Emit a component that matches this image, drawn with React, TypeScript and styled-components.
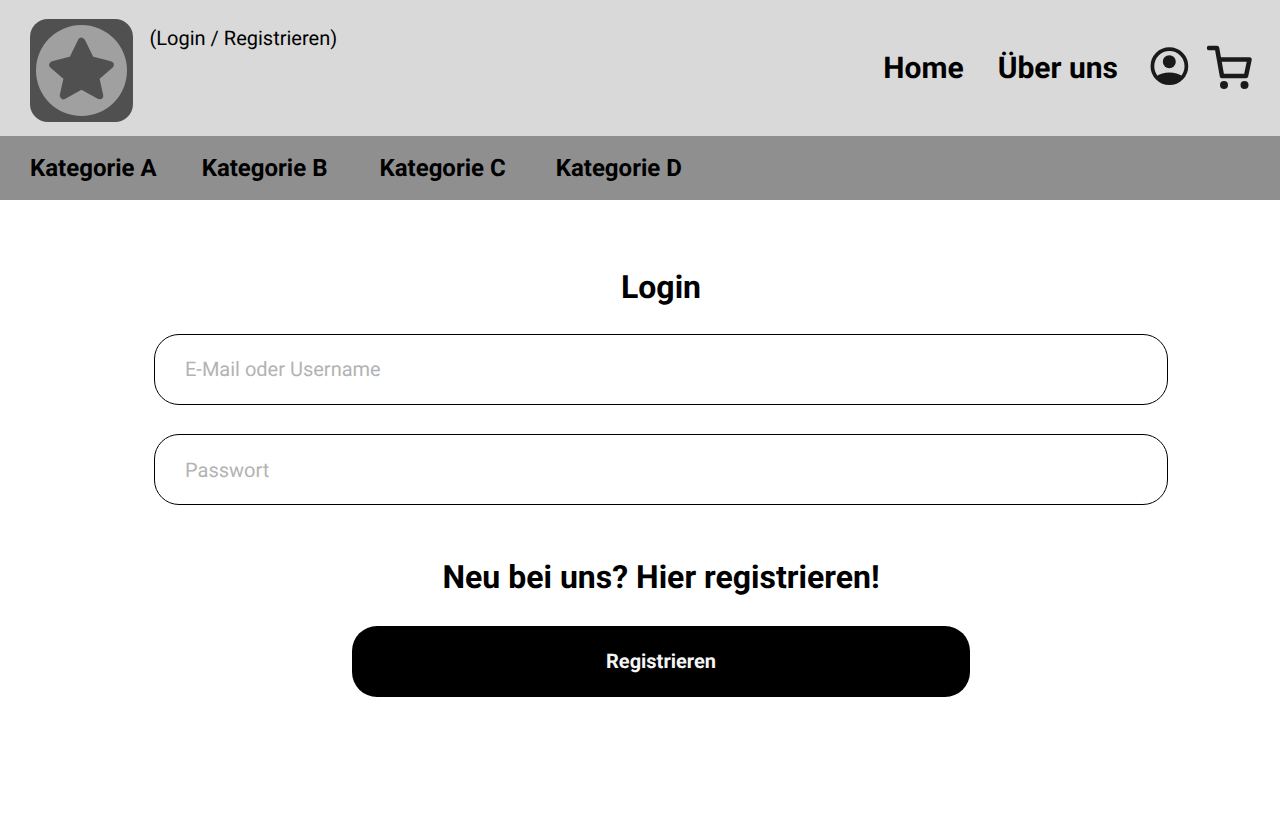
import { createGlobalStyle, styled } from 'styled-components';

const GlobalStyle = createGlobalStyle`
    html, body {
        margin: 0;
        padding: 0;
        background: #fff;
        font-family: Roboto, "Liberation Sans", sans-serif;
        color: #000;
        text-rendering: geometricPrecision;
    }
`;

const Header = styled.header`
    height: 136px;
    box-sizing: border-box;
    background: #d9d9d9;
    display: flex;
    justify-content: space-between;
    padding: 19px 27px 0 30px;
`;

const Brand = styled.div`
    display: flex;
    align-items: flex-start;
    gap: 16.5px;
`;

const Logo = styled.svg`
    display: block;
    width: 103px;
    height: 103px;
`;

const LoginLink = styled.a`
    font-size: 20px;
    line-height: 24px;
    margin-top: 7px;
`;

const HeaderRight = styled.div`
    display: flex;
    align-items: flex-start;
    padding-top: 28px;
`;

const HeaderLink = styled.a<{ $gap: number }>`
    font-size: 30px;
    font-weight: 700;
    line-height: 42px;
    margin-top: 1px;
    margin-right: ${(p) => p.$gap}px;
`;

const IconSvg = styled.svg<{ $gap?: number; $top: number }>`
    display: block;
    margin-right: ${(p) => p.$gap ?? 0}px;
    margin-top: ${(p) => p.$top}px;
`;

const CategoryBar = styled.nav`
    height: 64px;
    background: #8f8f8f;
    display: flex;
    align-items: center;
    padding-left: 30px;
`;

const Category = styled.a<{ $gap: number }>`
    font-size: 24px;
    font-weight: 700;
    line-height: 28px;
    margin-right: ${(p) => p.$gap}px;
`;

const Main = styled.main`
    padding: 68px 112px 0 154px;
    display: flex;
    flex-direction: column;
    align-items: center;
`;

const Title = styled.h2`
    margin: 0;
    font-size: 32px;
    font-weight: 700;
    line-height: 38px;
`;

const Input = styled.input<{ $lift?: boolean }>`
    display: block;
    width: 100%;
    height: 71px;
    box-sizing: border-box;
    border: 1px solid #000;
    border-radius: 25px;
    padding: 0 30px ${(p) => (p.$lift ? 2 : 0)}px;
    background: #fff;
    font-family: inherit;
    font-size: 20px;
    text-rendering: geometricPrecision;
    outline: none;

    &::placeholder {
        color: #b3b3b3;
        opacity: 1;
    }
`;

const LoginForm = styled.form`
    width: 100%;
    display: flex;
    flex-direction: column;
    gap: 29px;
    margin: 28px 0 53px;
`;

const RegisterButton = styled.button`
    width: 618px;
    height: 71px;
    margin-top: 30px;
    padding: 0 0 2px;
    border: none;
    border-radius: 25px;
    background: #000;
    color: #f5f5f5;
    font-family: inherit;
    font-size: 20px;
    font-weight: 700;
    text-rendering: geometricPrecision;
    cursor: pointer;
`;

const categories = [
    { name: 'Kategorie A', gap: 45 },
    { name: 'Kategorie B', gap: 52 },
    { name: 'Kategorie C', gap: 50 },
    { name: 'Kategorie D', gap: 0 },
];

export default function App() {
    return (
        <>
            <GlobalStyle />
            <Header>
                <Brand>
                    <Logo viewBox="0 0 103 103">
                        <rect width="103" height="103" rx="18" fill="#505050" />
                        <circle cx="51.5" cy="51.5" r="45.5" fill="#a0a0a0" />
                        <path
                            d="M51.5 22.5 L60.5 41 L80 46 L65.5 58.5 L69.5 76.5 L51.5 66.5 L33.5 76.5 L37.5 58.5 L23 46 L42.5 41 Z"
                            fill="#505050"
                            stroke="#505050"
                            strokeWidth="7.5"
                            strokeLinejoin="round"
                        />
                    </Logo>
                    <LoginLink>(Login / Registrieren)</LoginLink>
                </Brand>
                <HeaderRight>
                    <HeaderLink $gap={34}>Home</HeaderLink>
                    <HeaderLink $gap={32}>Über uns</HeaderLink>
                    <IconSvg $gap={17} $top={0} width="40" height="40" viewBox="0 0 40 40">
                        <circle cx="19.4" cy="19.2" r="17" fill="none" stroke="#1a1a1a" strokeWidth="3.7" />
                        <circle cx="19.3" cy="14.7" r="6.5" fill="#1a1a1a" />
                        <path d="M5.5 30 C10 26.5 14.5 25.5 19.4 25.5 C24.3 25.5 28.8 26.5 33.3 30 C29.5 34.5 24.5 36 19.4 36 C14.3 36 9.3 34.5 5.5 30 Z" fill="#1a1a1a" />
                    </IconSvg>
                    <IconSvg $top={-2} width="46" height="46" viewBox="0 0 46 46">
                        <path
                            d="M2 3 H10 L15 31 H39 L42.5 14.5 H12"
                            fill="none"
                            stroke="#1a1a1a"
                            strokeWidth="4.5"
                            strokeLinecap="round"
                            strokeLinejoin="round"
                        />
                        <circle cx="17" cy="40" r="4" fill="#1a1a1a" />
                        <circle cx="37.5" cy="40" r="4" fill="#1a1a1a" />
                    </IconSvg>
                </HeaderRight>
            </Header>
            <CategoryBar>
                {categories.map((c) => (
                    <Category key={c.name} $gap={c.gap}>{c.name}</Category>
                ))}
            </CategoryBar>
            <Main>
                <Title>Login</Title>
                <LoginForm>
                    <Input type="text" placeholder="E-Mail oder Username" $lift />
                    <Input type="password" placeholder="Passwort" />
                </LoginForm>
                <Title>Neu bei uns? Hier registrieren!</Title>
                <RegisterButton type="button">Registrieren</RegisterButton>
            </Main>
        </>
    );
}
